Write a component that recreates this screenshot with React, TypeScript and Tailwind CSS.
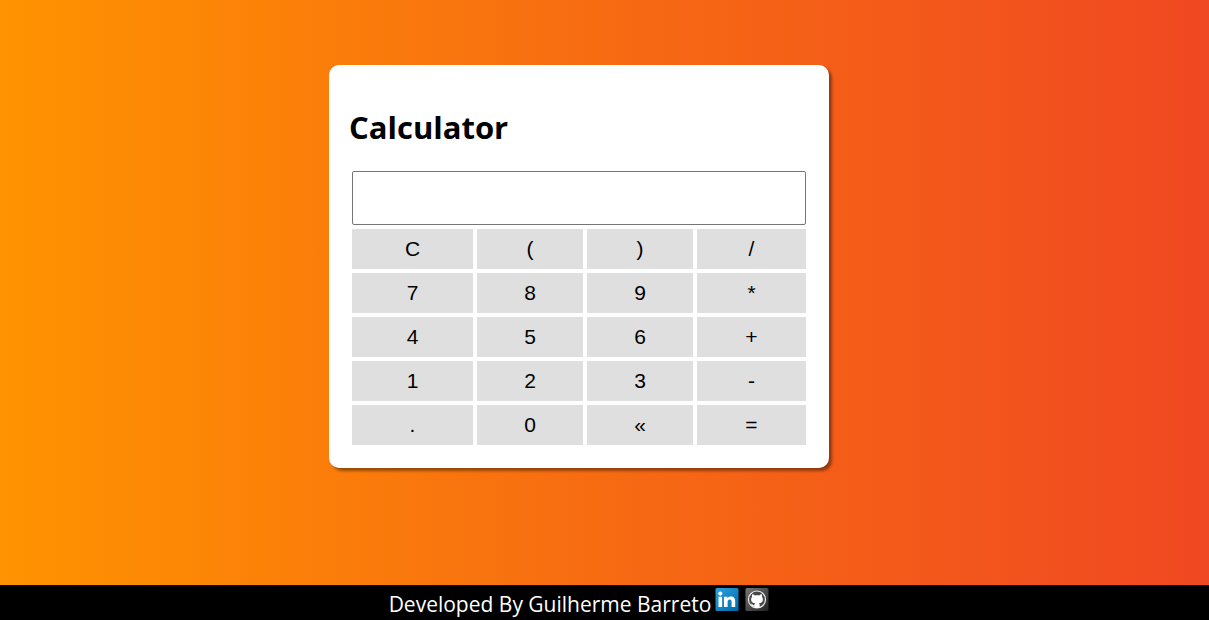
import { useState } from "react";

const keys = ["C", "(", ")", "/", "7", "8", "9", "*", "4", "5", "6", "+", "1", "2", "3", "-", ".", "0", "«", "="];

function evaluate(source: string): string {
  const text = source.replace(/\s/g, "");
  let at = 0;
  const factor = (): number => {
    if (text[at] === "-") {
      at++;
      return -factor();
    }
    if (text[at] === "(") {
      at++;
      const inner = sum();
      at++;
      return inner;
    }
    const start = at;
    while (at < text.length && /[\d.]/.test(text[at])) at++;
    return start === at ? NaN : Number(text.slice(start, at));
  };
  const product = (): number => {
    let value = factor();
    while (text[at] === "*" || text[at] === "/") {
      value = text[at++] === "*" ? value * factor() : value / factor();
    }
    return value;
  };
  const sum = (): number => {
    let value = product();
    while (text[at] === "+" || text[at] === "-") {
      value = text[at++] === "+" ? value + product() : value - product();
    }
    return value;
  };
  const result = sum();
  return at < text.length || Number.isNaN(result) ? "Error" : String(result);
}

function LinkedInIcon() {
  return (
    <svg viewBox="0 0 24 24" className="size-6" aria-hidden="true">
      <defs>
        <linearGradient id="blue" x1="0" y1="0" x2="1" y2="1">
          <stop offset="0" stopColor="#2aa3dc" />
          <stop offset="1" stopColor="#0068ad" />
        </linearGradient>
      </defs>
      <rect x="0.5" y="0" width="23" height="23" rx="1.5" fill="url(#blue)" />
      <circle cx="5.3" cy="5.600" r="2.1" fill="#fff" />
      <path
        fill="#fff"
        d="M3.500 8.800h3.600v10.200H3.500zM9 8.800h3.400v1.400c.7-1.100 1.800-1.700 3.400-1.700 3.300 0 4.400 2 4.400 5v5.500h-3.600v-5c0-1.600-.4-2.500-1.800-2.500-1.500 0-2.200 1-2.200 2.600v4.900H9z"
      />
    </svg>
  );
}

function GitHubIcon() {
  return (
    <svg viewBox="0 0 24 24" className="size-6" aria-hidden="true">
      <defs>
        <linearGradient id="grey" x1="0" y1="0" x2="1" y2="1">
          <stop offset="0" stopColor="#777" />
          <stop offset="1" stopColor="#222" />
        </linearGradient>
      </defs>
      <rect x="0.5" y="0" width="23" height="23" rx="1.5" fill="url(#grey)" />
      <circle cx="12" cy="11.5" r="8.5" fill="#484848" stroke="#eee" strokeWidth="1.2" />
      <path
        fill="#fff"
        d="M7.2 6.300c1 0 1.900.5 2.600 1.100 1.400-.3 3-.3 4.400 0 .7-.6 1.600-1.100 2.600-1.100.4.900.4 1.700.1 2.400.7.8 1 1.600 1 2.700 0 2.600-1.600 3.600-4 3.900.5.5.8 1.100.8 1.900v2.300a8 8 0 0 1-5.400 0v-1.300c-1.500.3-2.200-.4-2.600-1.300-.2-.4-.5-.7-.9-1 1.100-.3 1.500.4 1.900.9.400.5 1 .6 1.600.3.1-.8.3-1.400.8-1.800-2.400-.3-4-1.300-4-3.900 0-1.100.3-1.900 1-2.700-.3-.7-.3-1.500.1-2.400z"
      />
    </svg>
  );
}

export default function App() {
  const [expression, setExpression] = useState("");

  const press = (key: string) => {
    if (key === "C") setExpression("");
    else if (key === "«") setExpression(expression.slice(0, -1));
    else if (key === "=") setExpression(expression ? evaluate(expression) : "");
    else setExpression(expression + key);
  };

  return (
    <div className="flex min-h-screen flex-col bg-[linear-gradient(to_right,#ff9300,#f76b12,#f04822)] font-['Open_Sans',sans-serif] text-black">
      <main className="flex grow flex-col items-center pt-[65px] pr-[51px]">
        <section className="w-full max-w-[500px] rounded-[10px] bg-white px-[23px] pt-10 pb-[23px] shadow-[3px_3px_3px_rgba(0,0,0,0.4)]">
          <h1 className="-ml-[3px] text-[31px] leading-11 font-bold">Calculator</h1>
          <input
            aria-label="Result"
            readOnly
            value={expression}
            className="mt-[22px] block h-[54px] w-full rounded-[2px] border border-[#767676] bg-white px-2 text-right font-['Liberation_Sans',sans-serif] text-2xl"
          />
          <div className="mt-1 grid grid-cols-[121fr_106fr_106fr_109fr] gap-1">
            {keys.map((key) => (
              <button
                key={key}
                type="button"
                onClick={() => press(key)}
                className="h-10 cursor-pointer bg-[#dfdfdf] font-['Liberation_Sans',sans-serif] text-[21px] hover:bg-[#cfcfcf]"
              >
                {key}
              </button>
            ))}
          </div>
        </section>
      </main>
      <footer className="flex h-[35px] items-start justify-center bg-black pr-[51px] text-white">
        <p className="pt-1 text-[21px] leading-[30px]">Developed By Guilherme Barreto</p>
        <a href="https://www.linkedin.com" aria-label="LinkedIn" className="mt-[3px] ml-1">
          <LinkedInIcon />
        </a>
        <a href="https://github.com" aria-label="GitHub" className="mt-[3px] ml-1.5">
          <GitHubIcon />
        </a>
      </footer>
    </div>
  );
}
